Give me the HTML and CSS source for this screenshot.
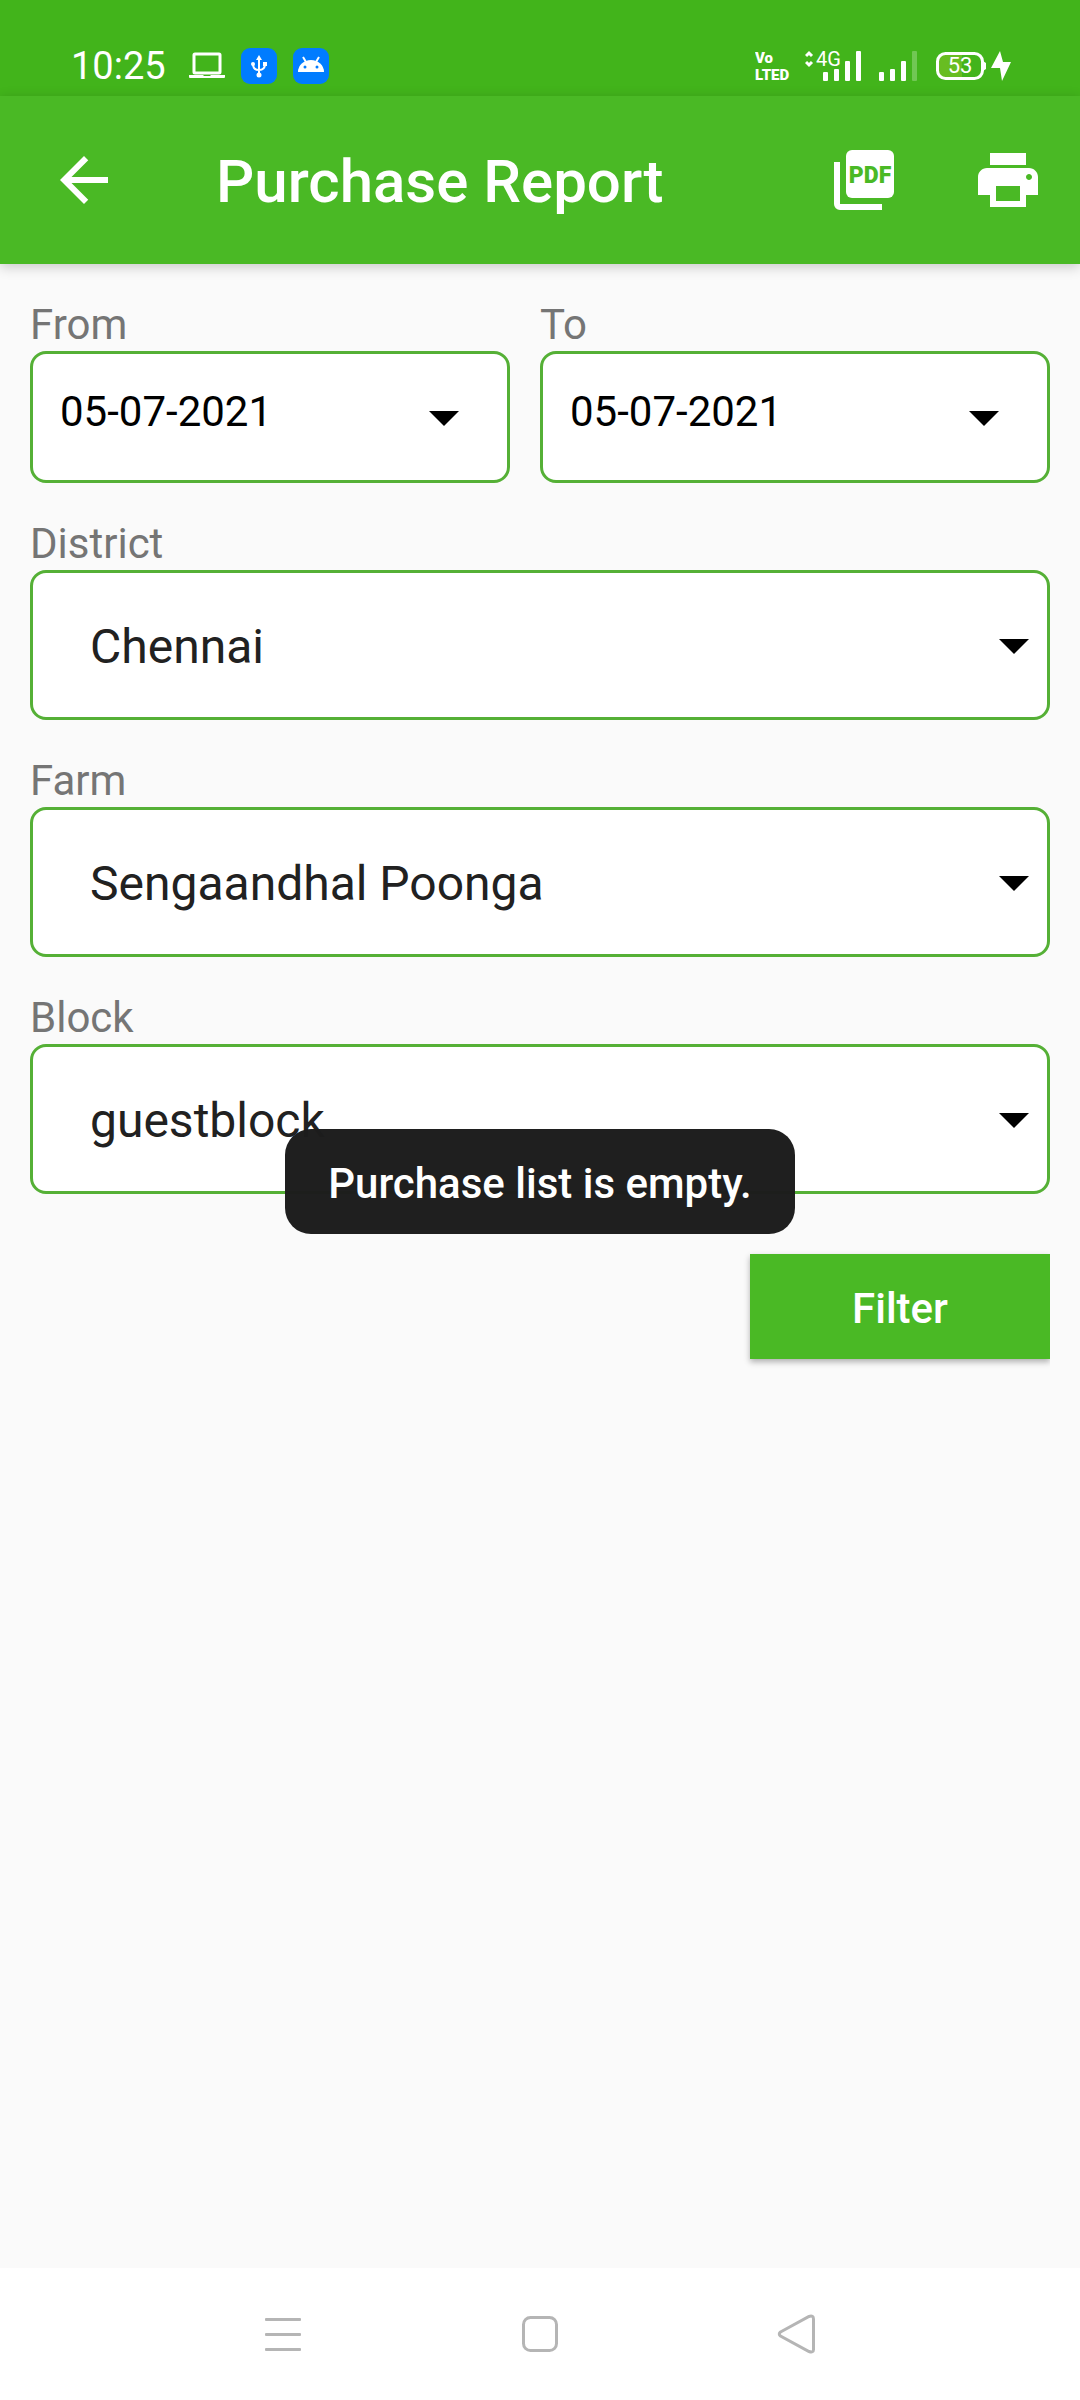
FILE: index.html
```html
<!DOCTYPE html>
<html lang="en">
<head>
  <meta charset="utf-8">
  <meta name="viewport" content="width=device-width, initial-scale=1">
  <title>Purchase Report</title>
  <link rel="stylesheet" href="styles.css">
</head>
<body>
  <div class="screen">
    <div class="status-bar">
      <div class="status-group">
        <span class="clock">10:25</span>
        <svg class="laptop" width="36" height="28" viewBox="0 0 36 28" aria-hidden="true">
          <rect x="5" y="2" width="26" height="19" rx="1" fill="none" stroke="#fff" stroke-width="3"/>
          <path d="M0 23h14l1 1h6l1-1h14v2a1 1 0 0 1-1 1H1a1 1 0 0 1-1-1z" fill="#fff"/>
        </svg>
        <svg class="badge" width="36" height="36" viewBox="0 0 36 36" aria-hidden="true">
          <rect width="36" height="36" rx="9" fill="#007cff"/>
          <path d="M18 10v17M18 22c-4 0-6-2-6-6M18 22c4 0 6-2 6-6" fill="none" stroke="#fff" stroke-width="2"/>
          <path d="M18 7l3 5h-6z" fill="#fff"/>
          <circle cx="12" cy="16" r="2" fill="#fff"/>
          <rect x="22" y="14" width="4" height="4" fill="#fff"/>
          <circle cx="18" cy="27" r="2.500" fill="#fff"/>
        </svg>
        <svg class="badge" width="36" height="36" viewBox="0 0 36 36" aria-hidden="true">
          <rect width="36" height="36" rx="9" fill="#007cff"/>
          <path d="M5 24a13 12 0 0 1 26 0z" fill="#fff"/>
          <path d="M10 9l3 5M26 9l-3 5" stroke="#fff" stroke-width="2"/>
          <circle cx="12" cy="19" r="1.500" fill="#007cff"/>
          <circle cx="24" cy="19" r="1.500" fill="#007cff"/>
        </svg>
      </div>
      <div class="status-group status-right">
        <svg width="38" height="40" viewBox="0 0 38 40" aria-label="VoLTE D">
          <text class="lte-text" x="0" y="17">Vo</text>
          <text class="lte-text" x="0" y="34">LTED</text>
        </svg>
        <svg class="signal-one" width="56" height="40" viewBox="0 0 56 40" aria-label="4G signal">
          <path d="M1 10l3-3 3 3M1 16l3 3 3-3" fill="none" stroke="#fff" stroke-width="3"/>
          <text class="net-text" x="11" y="20">4G</text>
          <g fill="#fff">
            <rect x="18" y="26" width="5" height="9" rx="1"/>
            <rect x="29" y="23" width="5" height="12" rx="1"/>
            <rect x="40" y="15" width="5" height="20" rx="1"/>
            <rect x="51" y="5" width="5" height="30" rx="1"/>
          </g>
        </svg>
        <svg class="signal-two" width="38" height="32" viewBox="0 0 38 32" aria-label="Signal">
          <g fill="#fff">
            <rect x="0" y="22" width="5" height="9" rx="1"/>
            <rect x="11" y="19" width="5" height="12" rx="1"/>
            <rect x="22" y="11" width="5" height="20" rx="1"/>
            <rect x="33" y="1" width="5" height="30" rx="1" opacity=".25"/>
          </g>
        </svg>
        <svg class="battery" width="50" height="32" viewBox="0 0 50 32" aria-label="Battery 53">
          <path d="M10 4h16v24H10a8 8 0 0 1-8-8v-8a8 8 0 0 1 8-8z" fill="#68bd22"/>
          <rect x="1.500" y="3.500" width="45" height="25" rx="8" fill="none" stroke="#fff" stroke-width="3"/>
          <path d="M47 11l3 2v6l-3 2z" fill="#fff"/>
          <text class="battery-text" x="24" y="23">53</text>
        </svg>
        <svg class="bolt" width="20" height="32" viewBox="0 0 20 32" aria-hidden="true">
          <path d="M9 1L0 18h9v0l2 13 9-19h-8z" fill="#fff"/>
        </svg>
      </div>
    </div>

    <header class="app-bar">
      <button class="icon-button" type="button" aria-label="Back">
        <svg width="72" height="72" viewBox="0 0 24 24"><path fill="#fff" d="M20 11H7.830l5.590-5.590L12 4l-8 8 8 8 1.410-1.410L7.830 13H20v-2z"/></svg>
      </button>
      <h1 class="title">Purchase Report</h1>
      <div class="actions">
        <button class="icon-button" type="button" aria-label="Export as PDF">
          <svg width="72" height="72" viewBox="0 0 72 72">
            <rect x="18" y="6" width="48" height="48" rx="6" fill="#fff"/>
            <path d="M6 18h6v42h42v6H12a6 6 0 0 1-6-6z" fill="#fff"/>
            <text class="pdf-text" x="42" y="39">PDF</text>
          </svg>
        </button>
        <button class="icon-button" type="button" aria-label="Print">
          <svg width="72" height="72" viewBox="0 0 24 24"><path fill="#fff" d="M19 8H5c-1.660 0-3 1.340-3 3v6h4v4h12v-4h4v-6c0-1.660-1.340-3-3-3zm-3 11H8v-5h8v5zm3-7c-.550 0-1-.450-1-1s.450-1 1-1 1 .450 1 1-.450 1-1 1zm-1-9H6v4h12V3z"/></svg>
        </button>
      </div>
    </header>

    <main class="content">
      <form class="filters">
        <div class="date-row">
          <div class="field date-from">
            <label class="label" for="from">From</label>
            <div class="control date-control">
              <input class="box date-box" id="from" type="text" value="05-07-2021">
              <svg class="caret" width="30" height="15" viewBox="0 0 30 15" aria-hidden="true"><path d="M0 0h30L15 15z"/></svg>
            </div>
          </div>
          <div class="field date-to">
            <label class="label" for="to">To</label>
            <div class="control date-control">
              <input class="box date-box" id="to" type="text" value="05-07-2021">
              <svg class="caret" width="30" height="15" viewBox="0 0 30 15" aria-hidden="true"><path d="M0 0h30L15 15z"/></svg>
            </div>
          </div>
        </div>
        <div class="field">
          <label class="label" for="district">District</label>
          <div class="control">
            <select class="box select-box" id="district"><option>Chennai</option></select>
            <svg class="caret" width="30" height="15" viewBox="0 0 30 15" aria-hidden="true"><path d="M0 0h30L15 15z"/></svg>
          </div>
        </div>
        <div class="field">
          <label class="label" for="farm">Farm</label>
          <div class="control">
            <select class="box select-box" id="farm"><option>Sengaandhal Poonga</option></select>
            <svg class="caret" width="30" height="15" viewBox="0 0 30 15" aria-hidden="true"><path d="M0 0h30L15 15z"/></svg>
          </div>
        </div>
        <div class="field toast-anchor">
          <label class="label" for="block">Block</label>
          <div class="control">
            <select class="box select-box" id="block"><option>guestblock</option></select>
            <svg class="caret" width="30" height="15" viewBox="0 0 30 15" aria-hidden="true"><path d="M0 0h30L15 15z"/></svg>
          </div>
          <div class="toast" role="status">Purchase list is empty.</div>
        </div>
        <button class="filter-button" type="button">Filter</button>
      </form>
    </main>

    <nav class="nav-bar" aria-label="System navigation">
      <button class="nav-button" type="button" aria-label="Recent apps">
        <svg width="40" height="40" viewBox="0 0 40 40"><g fill="#b5b5b5"><rect x="2" y="4" width="36" height="3" rx="1"/><rect x="2" y="19" width="36" height="3" rx="1"/><rect x="2" y="34" width="36" height="3" rx="1"/></g></svg>
      </button>
      <button class="nav-button" type="button" aria-label="Home">
        <svg width="40" height="40" viewBox="0 0 40 40"><rect x="3.500" y="3.500" width="33" height="33" rx="7" fill="none" stroke="#b5b5b5" stroke-width="3"/></svg>
      </button>
      <button class="nav-button" type="button" aria-label="Back">
        <svg width="40" height="40" viewBox="0 0 40 40"><path d="M3.500 18L32 2.500Q36.500 1 36.500 5v30.500Q36.500 39 32 37.500L3.500 22Q1 20 3.500 18z" fill="none" stroke="#b5b5b5" stroke-width="3"/></svg>
      </button>
    </nav>
  </div>
</body>
</html>
```
FILE: styles.css
```css
* {
  box-sizing: border-box;
}

body {
  margin: 0;
  background: #fafafa;
  font-family: Roboto, "Liberation Sans", sans-serif;
  color: #212121;
}

button,
input,
select {
  margin: 0;
  font: inherit;
}

svg {
  display: block;
  flex: none;
}

.screen {
  display: flex;
  flex-direction: column;
  min-height: 100vh;
}

/* Status bar */
.status-bar {
  display: flex;
  justify-content: space-between;
  align-items: center;
  height: 96px;
  padding: 36px 69px 0 71px;
  background: #42b41b;
  color: #fff;
}

.status-group {
  display: flex;
  align-items: center;
}

.clock {
  font-size: 38px;
  line-height: 44px;
}

.laptop {
  margin-left: 23px;
}

.badge {
  margin-left: 16px;
}

.signal-one {
  margin-left: 12px;
}

.signal-two {
  margin-left: 18px;
}

.battery {
  margin-left: 19px;
}

.bolt {
  margin-left: 5px;
}

.lte-text,
.net-text,
.battery-text {
  fill: #fff;
  font-size: 20px;
}

.lte-text {
  font-size: 15px;
  font-weight: 900;
}

.battery-text {
  font-size: 22px;
  text-anchor: middle;
}

/* App bar */
.app-bar {
  position: relative;
  display: flex;
  align-items: center;
  min-height: 168px;
  padding: 0 36px 0 48px;
  background: #4ab925;
  color: #fff;
  box-shadow: 0 3px 12px rgba(0, 0, 0, 0.2);
}

.icon-button {
  padding: 0;
  border: 0;
  background: none;
}

.title {
  flex: 1;
  margin: 0 0 0 96px;
  padding-top: 4px;
  font-size: 60px;
  font-weight: 500;
  line-height: 72px;
}

.actions {
  display: flex;
  gap: 72px;
}

.pdf-text {
  fill: #4ab925;
  font-size: 23px;
  font-weight: 900;
  text-anchor: middle;
}

/* Filter form */
.content {
  flex: 1;
}

.filters {
  display: flex;
  flex-direction: column;
  gap: 35px;
  padding: 35px 30px 60px;
}

.date-row {
  display: grid;
  grid-template-columns: 1fr 1fr;
  margin: 0 -30px;
}

.date-from {
  padding: 0 30px;
}

.date-to {
  padding-right: 30px;
}

.label {
  display: block;
  font-size: 42px;
  line-height: 52px;
  color: #757575;
}

.control {
  display: grid;
  align-items: center;
}

.box {
  grid-area: 1 / 1;
  width: 100%;
  min-width: 0;
  border: 3px solid #55b036;
  border-radius: 16px;
  background: #fff;
  outline: 0;
  appearance: none;
}

.date-box {
  height: 132px;
  padding: 0 90px 12px 27px;
  font-size: 42px;
  color: #000;
}

.select-box {
  height: 150px;
  padding: 3px 60px 0 57px;
  font-size: 48px;
  color: #212121;
}

.caret {
  grid-area: 1 / 1;
  justify-self: end;
  margin: 2px 21px 0 0;
  pointer-events: none;
}

.date-control .caret {
  margin-right: 51px;
}

.toast-anchor {
  position: relative;
}

.toast {
  position: absolute;
  right: 0;
  bottom: -40px;
  left: 0;
  width: fit-content;
  margin: 0 auto;
  padding: 30px 43px 26px;
  border-radius: 26px;
  background: rgba(28, 28, 28, 0.99);
  color: #fff;
  font-size: 42px;
  font-weight: 500;
  line-height: 49px;
}

.filter-button {
  align-self: flex-end;
  width: 300px;
  height: 105px;
  margin-top: 25px;
  padding: 3px 0 0;
  border: 0;
  background: #4ab925;
  box-shadow: 0 3px 6px rgba(0, 0, 0, 0.3);
  clip-path: inset(-12px 0 -12px -12px);
  color: #fff;
  font-size: 42px;
  font-weight: 500;
}

/* System navigation */
.nav-bar {
  display: flex;
  justify-content: space-between;
  height: 132px;
  padding: 0 154px;
  background: #fff;
}

.nav-button {
  display: flex;
  flex: 1;
  align-items: center;
  justify-content: center;
  padding: 0;
  border: 0;
  background: none;
}
```
